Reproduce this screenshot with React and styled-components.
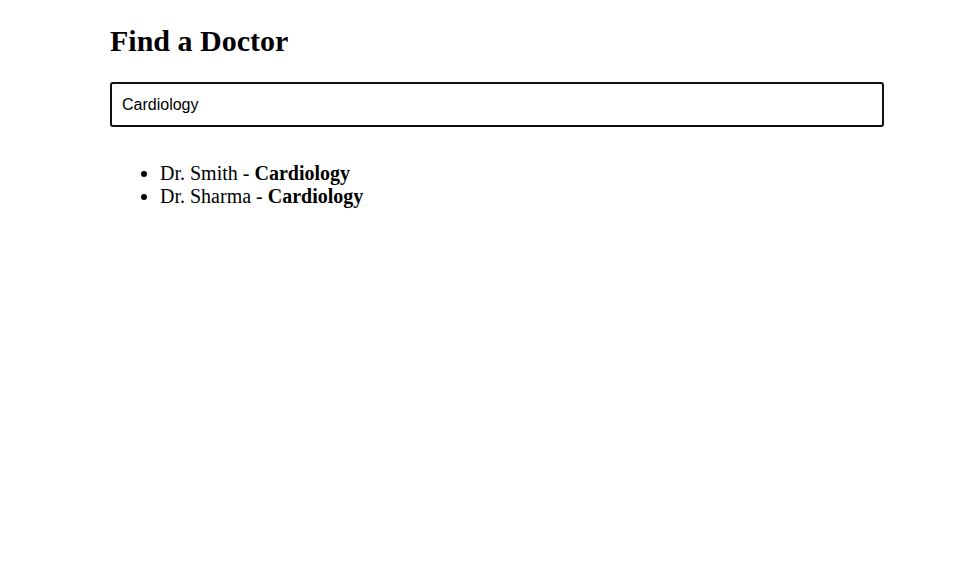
import React, { useEffect, useRef, useState } from "react";
import styled, { createGlobalStyle } from "styled-components";

const GlobalStyle = createGlobalStyle`
  html, body {
    margin: 0;
    padding: 0;
    background: #ffffff;
  }
  body {
    font-family: "Liberation Serif", "Times New Roman", serif;
    color: #000000;
  }
`;

const Page = styled.main`
  padding: 0 81px 0 110px;
  display: flex;
  flex-direction: column;
`;

const Title = styled.h1`
  margin: 24px 0 24px;
  font-size: 30px;
  font-weight: bold;
  line-height: normal;
`;

const SearchInput = styled.input`
  box-sizing: border-box;
  width: 100%;
  height: 45px;
  margin: 0 0 15px;
  padding: 0 10px;
  border: 2px solid #101010;
  border-radius: 3px;
  outline: none;
  font-family: "Liberation Sans", Arial, sans-serif;
  font-size: 16px;
  color: #000000;
  background: #ffffff;
  caret-color: #000000;
`;

const ResultList = styled.ul`
  margin: 20px 0;
  padding-left: 50px;
  list-style: disc;
  font-size: 20px;
  line-height: 23px;
`;

const ResultItem = styled.li``;

const Specialty = styled.strong`
  font-weight: bold;
`;

const doctors = [
  { name: "Dr. Smith", specialty: "Cardiology" },
  { name: "Dr. Sharma", specialty: "Cardiology" },
];

export default function App() {
  const [query, setQuery] = useState("Cardiology");
  const inputRef = useRef(null);

  useEffect(() => {
    const el = inputRef.current;
    if (el) {
      el.focus();
      el.setSelectionRange(el.value.length, el.value.length);
    }
  }, []);

  const results = doctors.filter((d) =>
    d.specialty.toLowerCase().includes(query.toLowerCase())
  );

  return (
    <>
      <GlobalStyle />
      <Page>
        <Title>Find a Doctor</Title>
        <SearchInput
          ref={inputRef}
          type="text"
          value={query}
          onChange={(e) => setQuery(e.target.value)}
        />
        <ResultList>
          {results.map((d) => (
            <ResultItem key={d.name}>
              {d.name} - <Specialty>{d.specialty}</Specialty>
            </ResultItem>
          ))}
        </ResultList>
      </Page>
    </>
  );
}
